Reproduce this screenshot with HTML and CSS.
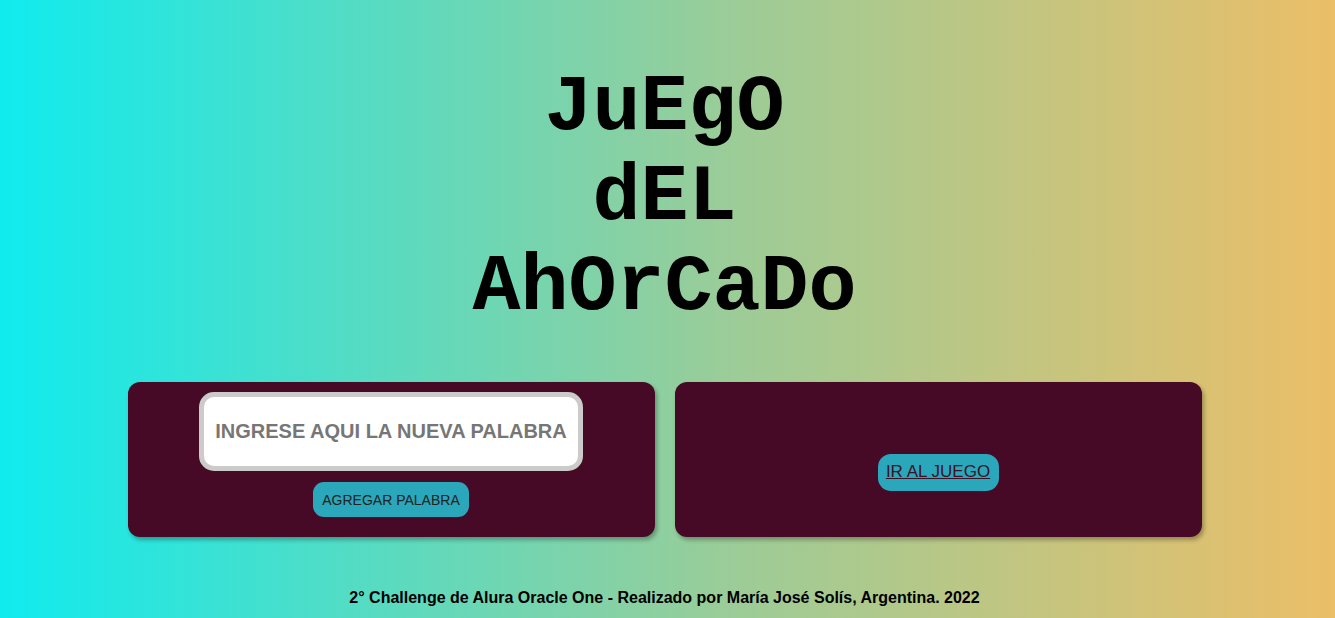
FILE: index.html
```html
<!DOCTYPE html>
<html lang="es">
<head>
<meta charset="utf-8">
<title>Juego del Ahorcado</title>
<link rel="stylesheet" href="styles.css">
</head>
<body>
<main class="page">
  <h1 class="title">JuEgO<br>dEL<br>AhOrCaDo</h1>
  <section class="cards">
    <div class="card card-add">
      <input class="word-input" type="text" placeholder="INGRESE AQUI LA NUEVA PALABRA">
      <button class="btn btn-add">AGREGAR PALABRA</button>
    </div>
    <div class="card card-play">
      <a class="btn btn-play" href="#">IR AL JUEGO</a>
    </div>
  </section>
  <footer class="footer">2° Challenge de Alura Oracle One - Realizado por María José Solís, Argentina. 2022</footer>
</main>
</body>
</html>
```

FILE: styles.css
```css
html, body {
  margin: 0;
  padding: 0;
  height: 100%;
}
body {
  background: linear-gradient(to right, #10ebee 0%, #9ccc97 55%, #ebbe68 100%);
  font-family: "Liberation Sans", Arial, sans-serif;
}
.page {
  display: flex;
  flex-direction: column;
  align-items: center;
  padding-right: 6px;
}
.title {
  margin: 63px 0 0;
  font-family: "Liberation Mono", "Courier New", monospace;
  font-weight: bold;
  font-size: 80px;
  line-height: 90px;
  text-align: center;
  color: #000;
}
.cards {
  display: flex;
  gap: 20px;
  margin-top: 49px;
}
.card {
  width: 527px;
  height: 155px;
  box-sizing: border-box;
  background: #470a26;
  border-radius: 12px;
  box-shadow: 2px 3px 4px rgba(0, 0, 0, 0.3);
  display: flex;
  flex-direction: column;
  align-items: center;
}
.card-add {
  padding-top: 10px;
}
.card-play {
  justify-content: center;
  padding-top: 25px;
}
.word-input {
  width: 384px;
  height: 79px;
  box-sizing: border-box;
  border: 5px solid #cbcbcb;
  border-radius: 15px;
  background: #fff;
  font-family: "Liberation Sans", Arial, sans-serif;
  font-weight: bold;
  font-size: 20px;
  text-align: center;
  color: #333;
  outline: none;
}
.word-input::placeholder {
  color: #767676;
}
.btn {
  background: #2aa7bb;
  border: none;
  border-radius: 11px;
  color: #222;
  font-family: "Liberation Sans", Arial, sans-serif;
  display: inline-flex;
  align-items: center;
  justify-content: center;
}
.btn-add {
  margin-top: 11px;
  width: 156px;
  height: 35px;
  font-size: 14px;
  padding: 0;
}
.btn-play {
  width: 121px;
  height: 37px;
  border-radius: 13px;
  font-size: 17px;
  color: #3a1226;
  text-decoration: underline;
}
.footer {
  margin-top: 52px;
  font-weight: bold;
  font-size: 16px;
  color: #000;
  text-align: center;
}
```
